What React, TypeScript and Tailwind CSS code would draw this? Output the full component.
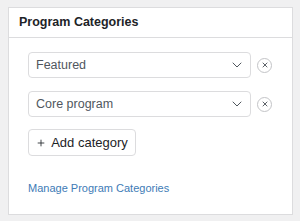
import { ChevronDown, X, Plus } from 'lucide-react';

const categories = ['Featured', 'Core program'];

function CategoryRow({ label }: { label: string }) {
  return (
    <div className="flex items-center gap-[6px]">
      <div className="flex h-[26px] w-[223px] items-center justify-between rounded-[4px] border border-[#dcdcde] bg-white pl-[7px] pr-[5px]">
        <span className="text-[12.5px] text-[#50575e]">{label}</span>
        <ChevronDown className="h-[16px] w-[16px] text-[#50575e]" strokeWidth={1.5} />
      </div>
      <button className="flex h-[15px] w-[15px] items-center justify-center rounded-full border border-[#c3c4c7] bg-white">
        <X className="h-[8px] w-[8px] text-[#3c434a]" strokeWidth={2.5} />
      </button>
    </div>
  );
}

export default function App() {
  return (
    <div className="h-[221px] w-[300px] bg-[#f0f0f1] pt-[7px] pl-[8px]" style={{ fontFamily: '"Liberation Sans", Arial, sans-serif' }}>
      <div className="h-[208px] w-[285px] border border-[#dcdcde] bg-white">
        <div className="flex h-[30px] items-center border-b border-[#dcdcde] px-[10px]">
          <h2 className="text-[12.5px] font-bold text-[#1d2327]">Program Categories</h2>
        </div>
        <div className="flex flex-col px-[19px] pt-[14px]">
          <div className="flex flex-col gap-[13px]">
            {categories.map((c) => (
              <CategoryRow key={c} label={c} />
            ))}
          </div>
          <button className="mt-[12px] flex h-[27px] w-[108px] items-center justify-center gap-[5px] rounded-[4px] border border-[#dcdcde] bg-white text-[13px] text-[#1d2327]">
            <Plus className="h-[10px] w-[10px]" strokeWidth={2} />
            Add category
          </button>
          <a href="#" className="mt-[24px] text-[11px] text-[#3e7bb6]">
            Manage Program Categories
          </a>
        </div>
      </div>
    </div>
  );
}
